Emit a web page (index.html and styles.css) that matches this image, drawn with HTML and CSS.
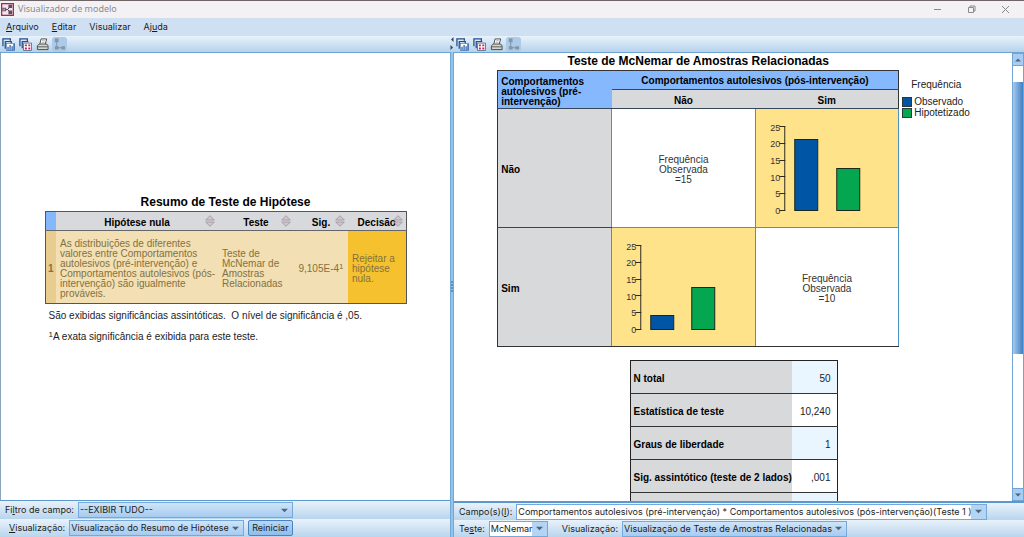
FILE: index.html
```html
<!DOCTYPE html>
<html lang="pt">
<head>
<meta charset="utf-8">
<title>Visualizador de modelo</title>
<link rel="stylesheet" href="styles.css">
</head>
<body>
<svg class="defs" width="0" height="0" aria-hidden="true">
  <symbol id="i-chart" viewBox="0 0 14 14"><path d="M1 9V1h8v2" fill="#dce9f6" stroke="#234f8e" stroke-width="1.4"/><path d="M3.500 11.500V4h6.500v2" fill="#fff" stroke="#234f8e" stroke-width="1.400"/><rect x="5" y="6" width="8.500" height="7.500" fill="#fff" stroke="#2d5ea2" stroke-width=".6"/><path d="M6.500 13.500V9.500M8.700 13.500V7.500M10.900 13.500V9M12.900 13.500V6.500" stroke="#1f59ab" stroke-width="1.300"/></symbol>
  <symbol id="i-table" viewBox="0 0 14 14"><path d="M1 9V1h8v3" fill="#dce9f6" stroke="#234f8e" stroke-width="1.400"/><path d="M3.500 11V4H10" fill="#fff" stroke="#234f8e" stroke-width="1.400"/><rect x="5" y="5.500" width="8.500" height="8" fill="#fff" stroke="#48577d" stroke-width=".8"/><path d="M6.300 8h2.200M10 8h2.200M6.300 11.300h2.200M10 11.300h2.200" stroke="#c32b5a" stroke-width="2"/></symbol>
  <symbol id="i-print" viewBox="0 0 14 14"><path d="M4 7 5.500 1h6L9.800 7z" fill="#fff" stroke="#444"/><path d="M1.500 8.500 3.500 6.500h8l1.500 2v4H1.500z" fill="#d6d6cd" stroke="#444"/><path d="M2 9.500h10.500" stroke="#555"/><path d="M6.500 3h3M6 5h3" stroke="#888" stroke-width=".7"/></symbol>
  <symbol id="i-tree" viewBox="0 0 14 14"><path d="M4 3v7.500h7" fill="none" stroke="#7d93a9"/><path d="M2 .5h4v4H2zM2 9h4v3.500H2zM9 9h4v3.500H9z" fill="#8495a7"/></symbol>
  <symbol id="i-down" viewBox="0 0 8 5"><path d="M0 .5h8L4 4.500z" fill="#4c6680"/></symbol>
  <symbol id="i-sort" viewBox="0 0 10 12"><path d="M.7 5 5 .7 9.300 5zM.7 7 5 11.300 9.300 7z" fill="#d3c3cd" stroke="#9d929e" stroke-width=".8"/></symbol>
</svg>

<header class="titlebar">
  <svg class="app-icon" viewBox="0 0 14 14"><rect x=".7" y=".7" width="12.600" height="12.600" fill="#f4e7ec" stroke="#a52a55" stroke-width="1.400"/><path d="M3 7h4l3-3M7 7l3 3" fill="none" stroke="#39314a"/><path d="M1.500 5h4v4h-4zM8 2h4v3.500H8zM8 8h4v4H8z" fill="#5d4c66"/><path d="M2.500 6h2v2h-2z" fill="#d5a7ba"/></svg>
  <span class="title">Visualizador de modelo</span>
  <div class="win-controls">
    <button aria-label="Minimizar"><svg viewBox="0 0 9 9"><path d="M1 4.500h7"/></svg></button>
    <button aria-label="Restaurar"><svg viewBox="0 0 9 9"><path d="M1.500 2.500h5v5h-5zM3 2.500V1h5v5H6.500"/></svg></button>
    <button aria-label="Fechar"><svg viewBox="0 0 9 9"><path d="m1 1 7 7M8 1 1 8"/></svg></button>
  </div>
</header>
<nav class="menubar">
  <button><u>A</u>rquivo</button><button><u>E</u>ditar</button><button>Visualizar</button><button>Aj<u>u</u>da</button>
</nav>

<main class="panes">
  <section class="pane">
    <div class="toolbar">
      <button aria-label="Gráfico"><svg><use href="#i-chart"/></svg></button>
      <button aria-label="Tabela"><svg><use href="#i-table"/></svg></button>
      <button aria-label="Imprimir"><svg><use href="#i-print"/></svg></button>
      <button class="pressed" aria-label="Modelo"><svg><use href="#i-tree"/></svg></button>
    </div>
    <div class="view summary-view">
      <div class="summary">
        <h2>Resumo de Teste de Hipótese</h2>
        <table class="hypothesis">
          <colgroup><col class="c-num"><col class="c-hyp"><col class="c-test"><col class="c-sig"><col class="c-dec"></colgroup>
          <thead><tr>
            <th class="corner"></th>
            <th><div><span>Hipótese nula</span><svg><use href="#i-sort"/></svg></div></th>
            <th><div><span>Teste</span><svg><use href="#i-sort"/></svg></div></th>
            <th><div><span>Sig.</span><svg><use href="#i-sort"/></svg></div></th>
            <th><div><span>Decisão</span><svg><use href="#i-sort"/></svg></div></th>
          </tr></thead>
          <tbody><tr>
            <th class="num">1</th>
            <td>As distribuições de diferentes valores entre Comportamentos autolesivos (pré-intervenção) e Comportamentos autolesivos (pós-intervenção) são igualmente prováveis.</td>
            <td>Teste de McNemar de Amostras Relacionadas</td>
            <td class="sig">9,105E-4<sup>1</sup></td>
            <td class="decision">Rejeitar a hipótese nula.</td>
          </tr></tbody>
        </table>
        <p>São exibidas significâncias assintóticas.&nbsp; O nível de significância é ,05.</p>
        <p><sup>1</sup>A exata significância é exibida para este teste.</p>
      </div>
    </div>
    <div class="controls">
      <label for="filtro">Fi<u>l</u>tro de campo:</label>
      <span class="combo wide"><select id="filtro"><option>--EXIBIR TUDO--</option></select><svg><use href="#i-down"/></svg></span>
    </div>
    <div class="controls second">
      <label for="vis1"><u>V</u>isualização:</label>
      <span class="combo"><select id="vis1"><option>Visualização do Resumo de Hipótese</option></select><svg><use href="#i-down"/></svg></span>
      <button class="reset">Reiniciar</button>
    </div>
  </section>

  <div class="splitter">
    <svg class="split-arrows" viewBox="0 0 4 16"><path d="M3.500 1v5L1 3.500zM.5 9v5L3 11.500z" fill="#33495e"/></svg>
    <svg class="grip" viewBox="0 0 4 12"><path d="M1 1h2M1 4h2M1 7h2M1 10h2" stroke="#2c5f91"/></svg>
  </div>

  <section class="pane">
    <div class="toolbar">
      <button aria-label="Gráfico"><svg><use href="#i-chart"/></svg></button>
      <button aria-label="Tabela"><svg><use href="#i-table"/></svg></button>
      <button aria-label="Imprimir"><svg><use href="#i-print"/></svg></button>
      <button class="pressed" aria-label="Modelo"><svg><use href="#i-tree"/></svg></button>
    </div>
    <div class="view detail-view">
      <div class="detail">
        <div class="matrix-group">
          <div>
            <h2>Teste de McNemar de Amostras Relacionadas</h2>
            <table class="matrix">
              <colgroup><col class="m-head"><col class="m-cell"><col class="m-cell"></colgroup>
              <tr class="head"><th rowspan="2" class="blue left">Comportamentos autolesivos (pré-intervenção)</th><th colspan="2" class="blue">Comportamentos autolesivos (pós-intervenção)</th></tr>
              <tr class="head"><th>Não</th><th>Sim</th></tr>
              <tr class="body">
                <th class="left">Não</th>
                <td>Frequência<br>Observada<br>=15</td>
                <td class="yellow"><svg class="chart" viewBox="0 0 142 118">
                  <path class="axis" d="M23 17.500h6M23 34.500h6M23 51.500h6M23 67.500h6M23 84.500h6M23 101.500h6M28.500 17v85"/>
                  <g class="ticks"><text x="24" y="22">25</text><text x="24" y="38">20</text><text x="24" y="55">15</text><text x="24" y="72">10</text><text x="24" y="88">5</text><text x="24" y="105">0</text></g>
                  <rect class="obs" x="38.500" y="30.500" width="23" height="71"/><rect class="hip" x="80.500" y="59.500" width="23" height="42"/>
                </svg></td>
              </tr>
              <tr class="body">
                <th class="left">Sim</th>
                <td class="yellow"><svg class="chart" viewBox="0 0 142 118">
                  <path class="axis" d="M23 17.500h6M23 34.500h6M23 51.500h6M23 67.500h6M23 84.500h6M23 101.500h6M28.500 17v85"/>
                  <g class="ticks"><text x="24" y="22">25</text><text x="24" y="38">20</text><text x="24" y="55">15</text><text x="24" y="72">10</text><text x="24" y="88">5</text><text x="24" y="105">0</text></g>
                  <rect class="obs" x="38.500" y="87.500" width="23" height="14"/><rect class="hip" x="79.500" y="59.500" width="23" height="42"/>
                </svg></td>
                <td>Frequência<br>Observada<br>=10</td>
              </tr>
            </table>
          </div>
          <div class="legend">
            <div class="legend-title">Frequência</div>
            <div class="key"><i class="obs"></i>Observado</div>
            <div class="key"><i class="hip"></i>Hipotetizado</div>
          </div>
        </div>
        <table class="stats">
          <tr><th>N total</th><td>50</td></tr>
          <tr><th>Estatística de teste</th><td>10,240</td></tr>
          <tr><th>Graus de liberdade</th><td>1</td></tr>
          <tr><th>Sig. assintótico (teste de 2 lados)</th><td>,001</td></tr>
          <tr><th></th><td></td></tr>
        </table>
      </div>
      <div class="scrollbar">
        <button aria-label="Rolar para cima"><svg class="up"><use href="#i-down"/></svg></button>
        <div class="track"><div class="thumb"></div></div>
        <button aria-label="Rolar para baixo"><svg><use href="#i-down"/></svg></button>
      </div>
    </div>
    <div class="controls">
      <label for="campos">Campo(s)(<u>I</u>):</label>
      <span class="combo white"><select id="campos"><option>Comportamentos autolesivos (pré-intervenção) * Comportamentos autolesivos (pós-intervenção)(Teste 1 )</option></select><svg><use href="#i-down"/></svg></span>
    </div>
    <div class="controls">
      <label for="teste">Te<u>s</u>te:</label>
      <span class="combo white"><select id="teste"><option>McNemar</option></select><svg><use href="#i-down"/></svg></span>
      <label class="spaced" for="vis2">Visualização:</label>
      <span class="combo"><select id="vis2"><option>Visualização de Teste de Amostras Relacionadas</option></select><svg><use href="#i-down"/></svg></span>
    </div>
  </section>
</main>
</body>
</html>
```
FILE: styles.css
```css
* { box-sizing: border-box; }
body {
  margin: 0;
  height: 100vh;
  display: flex;
  flex-direction: column;
  overflow: hidden;
  background: #fff;
  color: #1c1c1c;
  font: 10px/10px "Liberation Sans", Arial, sans-serif;
}
button, select { font: inherit; color: inherit; margin: 0; padding: 0; border: 0; background: none; }
h2, p { margin: 0; }
table { border-collapse: collapse; table-layout: fixed; }
th, td { padding: 0; }
svg { display: block; }
.defs { position: absolute; }

.titlebar {
  flex: none;
  display: flex;
  align-items: center;
  height: 18px;
  padding: 0 0 1px 1px;
  border-top: 1px solid #6e6466;
  background: #f3f1f3;
}
.app-icon { width: 13px; height: 13px; }
.title { margin-left: 4px; font: 9px/14px "Noto Sans", sans-serif; color: #8b8b8f; }
.win-controls { margin-left: auto; display: flex; gap: 25px; padding-right: 14px; }
.win-controls svg { width: 9px; height: 9px; fill: none; stroke: #8a8a8c; }

.menubar {
  flex: none;
  display: flex;
  align-items: center;
  gap: 13px;
  height: 18px;
  padding-left: 6px;
  background: #cfe0f2;
}
.menubar, .controls { font-family: Inter, "Liberation Sans", sans-serif; font-size: 9px; line-height: 12px; }

.panes { flex: 1; min-height: 0; display: grid; grid-template-columns: 450fr 4px 570fr; }
.pane { min-width: 0; min-height: 0; display: flex; flex-direction: column; }
.toolbar {
  flex: none;
  display: flex;
  align-items: center;
  gap: 2px;
  height: 17px;
  padding-left: 1px;
  border-bottom: 1px solid #6fa3d2;
  background: linear-gradient(#e9f2fb, #b5d2ec);
}
.toolbar button { padding: 1px; border-radius: 3px; }
.toolbar svg { width: 13px; height: 13px; }
.toolbar .pressed { background: #abcbe9; }

.splitter {
  position: relative;
  display: flex;
  flex-direction: column;
  justify-content: center;
  background: linear-gradient(90deg, #5d9bd0, #a9d0f0, #5d9bd0);
}
.split-arrows { position: absolute; top: 0; left: 0; width: 4px; height: 16px; background: linear-gradient(#e9f2fb, #b5d2ec); }
.grip { width: 4px; height: 12px; }

.view { flex: 1; min-height: 0; overflow: hidden; border-bottom: 2px solid #5d97cf; background: #fff; }
.summary-view { border-left: 1px solid #8aa4bd; border-bottom-width: 1px; }
.summary { width: 362px; margin: 141px auto 0; }
.summary h2, .detail h2 { font-size: 12px; line-height: 17px; text-align: center; color: #000; }
.summary p { margin-top: 6px; padding-left: 4px; line-height: 11px; }
.summary p + p { margin-top: 10px; }
sup { font-size: 8px; line-height: 0; vertical-align: 3px; }

.hypothesis { width: 100%; border: 1px solid #555; }
.c-num { width: 11px; }
.c-hyp { width: 162px; }
.c-test { width: 76px; }
.c-sig { width: 54px; }
.hypothesis thead th { height: 19px; border-bottom: 1px solid #666; background: #d8d9dc; color: #000; }
.hypothesis thead .corner { background: #85b7fb; }
.hypothesis thead div { display: grid; align-items: center; }
.hypothesis thead div > * { grid-area: 1 / 1; }
.hypothesis thead span { padding-top: 4px; text-align: center; }
.hypothesis thead svg { justify-self: end; width: 10px; height: 12px; margin-right: 3px; }
.hypothesis tbody { color: #85713d; background: #f2dfb4; }
.hypothesis tbody th, .hypothesis tbody td { height: 73px; padding-top: 4px; text-align: left; vertical-align: middle; }
.hypothesis tbody td { padding-left: 4px; }
.hypothesis tbody .num { background: #e9cd90; text-align: center; }
.hypothesis tbody .sig { padding-left: 0; text-align: center; }
.hypothesis tbody .decision { background: #f6c12f; }

.detail-view { display: flex; }
.detail { flex: 1; min-width: 0; display: flex; flex-direction: column; align-items: center; padding-left: 1px; }
.matrix-group { display: flex; gap: 3px; }
.matrix { width: 402px; border: 1px solid #333; }
.m-head { width: 114px; }
.matrix th { padding-top: 4px; border-bottom: 1px solid #36465a; background: #d8d9db; color: #000; }
.matrix .head th { height: 19px; }
.matrix .blue { padding-top: 2px; background: #85b8fc; }
.matrix .left { padding-top: 4px; padding-left: 3px; text-align: left; }
.matrix td { padding-top: 4px; border: 1px solid #4c92c4; text-align: center; color: #333; }
.matrix .body { height: 119px; }
.matrix .yellow { padding: 0; background: #fee38b; }
.matrix tr:last-child > * { border-bottom-color: #333; }
.chart { width: 100%; height: 118px; }
.axis { fill: none; stroke: #2d2a20; }
.ticks { font-size: 9px; text-anchor: end; fill: #333; }
rect.obs, rect.hip { stroke: #1c261c; }
.obs { fill: #0055a5; background: #0055a5; }
.hip { fill: #04a650; background: #04a650; }

.legend { padding-top: 26px; color: #222; }
.legend-title { margin-bottom: 5px; padding-left: 9px; line-height: 12px; }
.key { display: flex; align-items: center; gap: 2px; height: 11px; }
.key i { width: 10px; height: 10px; border: 1px solid #263a3a; }

.stats { width: 208px; margin-top: 13px; border: 1px solid #222; }
.stats tr { height: 33px; border-bottom: 1px solid #333; }
.stats th { width: 162px; padding: 4px 0 0 3px; background: #d8d9db; text-align: left; color: #000; white-space: nowrap; }
.stats td { padding: 4px 6px 0 0; text-align: right; }
.stats tr:nth-child(odd) td { background: #e9f5ff; }

.scrollbar { width: 12px; display: flex; flex-direction: column; border: 1px solid #70a5d6; background: #fff; }
.scrollbar button { flex: none; display: grid; place-items: center; height: 11px; background: #a8cdf2; }
.scrollbar svg { width: 6px; height: 4px; }
.up { transform: rotate(180deg); }
.track { flex: 1; padding-top: 16px; border: solid #70a5d6; border-width: 1px 0; }
.thumb { height: 67%; background: linear-gradient(90deg, #a5cbed, #3f7fc4); }

.controls {
  flex: none;
  display: flex;
  align-items: center;
  gap: 4px;
  height: 17px;
  padding-left: 5px;
  background: linear-gradient(#e9f2fb, #b9d5ee);
}
.controls label { white-space: nowrap; }
.summary-view ~ .controls { height: 18px; }
.summary-view ~ .second { padding-left: 9px; }
.spaced { margin-left: 10px; }
.combo { display: grid; align-items: center; border: 1px solid #74a9da; background: linear-gradient(#cfe4f8, #a6cbf0); }
.combo > * { grid-area: 1 / 1; }
.combo select { appearance: none; width: 100%; height: 14px; padding: 0 14px 0 1px; line-height: 14px; }
.combo svg { justify-self: end; width: 7px; height: 5px; margin-right: 4px; pointer-events: none; }
.combo.wide { width: 215px; }
.combo.white { background: linear-gradient(90deg, #fff calc(100% - 15px), #b3d4f3 0); }
.reset { height: 16px; padding: 0 3px; border: 1px solid #4785c2; border-radius: 2px; background: linear-gradient(#b6d6f6, #8ebdee); }
```
